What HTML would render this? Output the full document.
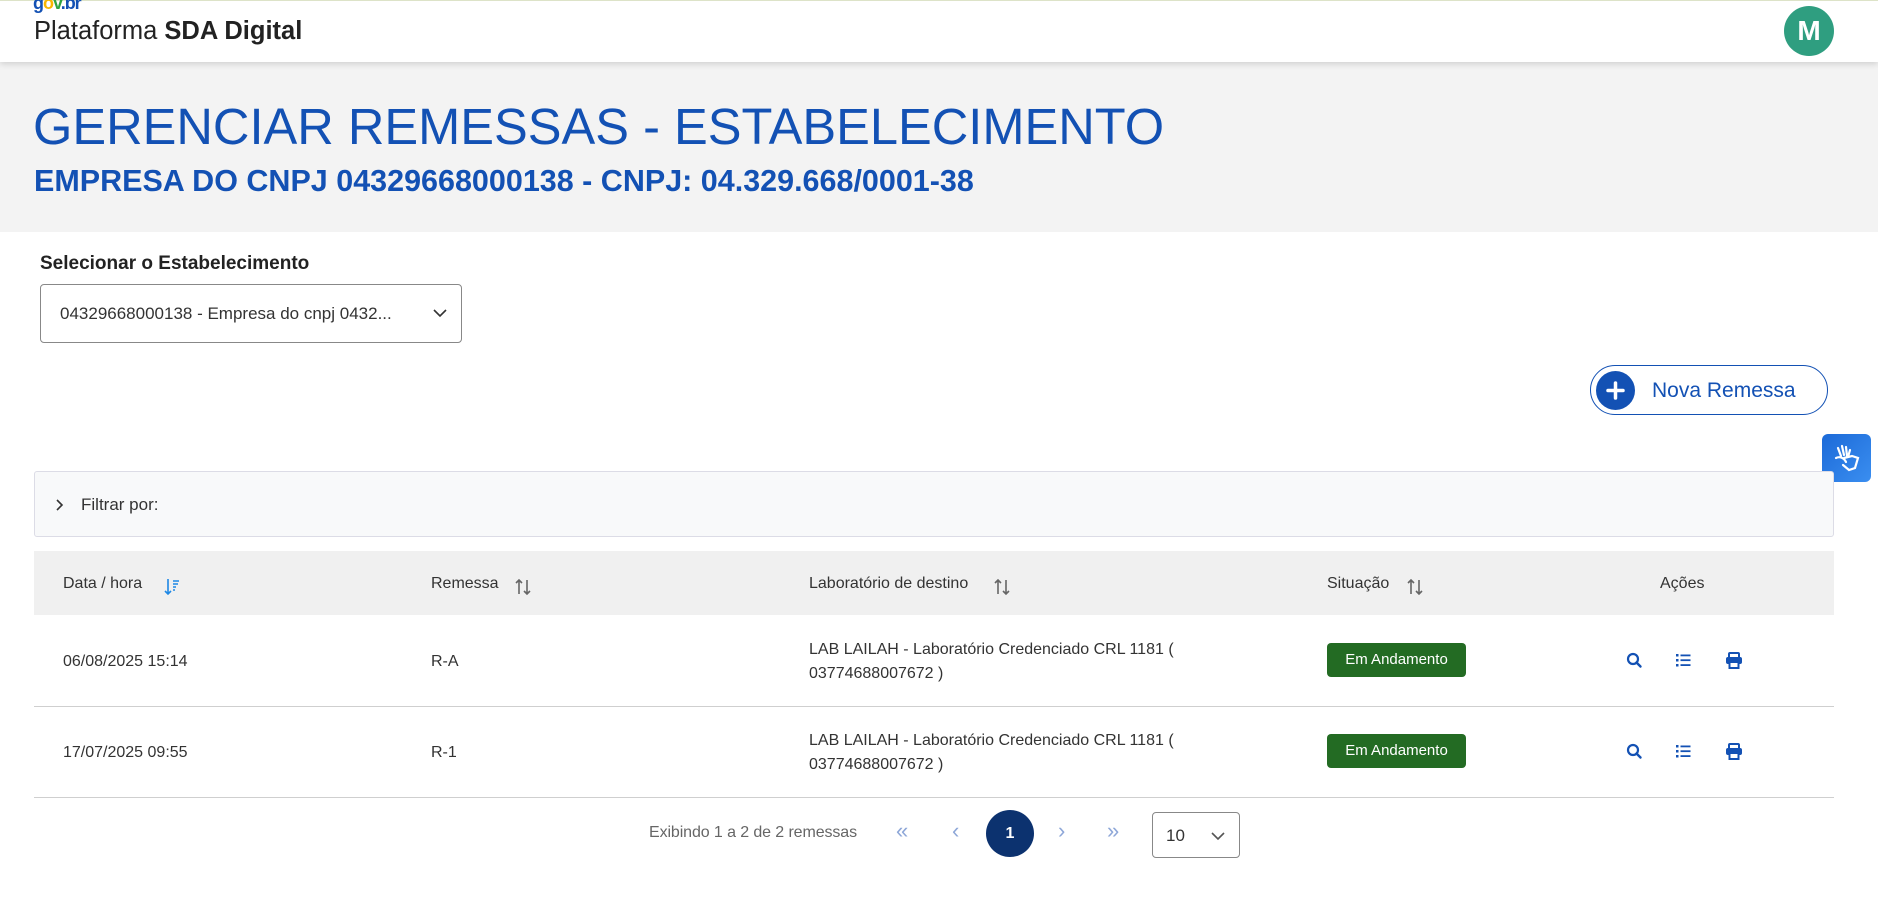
<!DOCTYPE html>
<html><head><meta charset="utf-8"><style>
*{box-sizing:border-box;margin:0;padding:0}
body{width:1878px;height:900px;overflow:hidden;background:#fff;font-family:"Liberation Sans",sans-serif;color:#333;position:relative}
.abs{position:absolute}
.hdr{left:0;top:0;width:1878px;height:62px;background:#fff;box-shadow:0 2px 6px rgba(0,0,0,.15);z-index:2;border-top:1px solid #dde3c8}
.band{left:0;top:62px;width:1878px;height:170px;background:#f3f3f3}
.blue{color:#1351b4}
.th{font-size:16px;color:#333;top:575px}
.td{font-size:16px;color:#333}
.badge{background:#236b23;color:#fff;font-size:15px;border-radius:4px;width:139px;height:34px;line-height:34px;text-align:center}
.line{left:34px;width:1800px;height:1px;background:#cfcfcf}
.pg{font-size:22px;color:#8ea7d8;top:818px}
</style></head><body>
<div class="abs hdr">
 <div class="abs" style="left:33px;top:-8px;font-weight:bold;font-size:18px;color:#1351b4;letter-spacing:-1px">g<span style="color:#f8b600">o</span><span style="color:#2fa341">v</span>.br</div>
 <div class="abs" style="left:34px;top:16px;font-size:25.5px;color:#222">Plataforma <b>SDA Digital</b></div>
 <div class="abs" style="left:1784px;top:5px;width:50px;height:50px;border-radius:50%;background:#2f9e80;color:#fff;font-weight:bold;font-size:28px;text-align:center;line-height:50px">M</div>
</div>
<div class="abs band"></div>
<div class="abs blue" style="left:33px;top:97px;font-size:50.6px;font-weight:300;white-space:nowrap">GERENCIAR REMESSAS - ESTABELECIMENTO</div>
<div class="abs blue" style="left:34px;top:164px;font-size:30.5px;font-weight:bold;white-space:nowrap">EMPRESA DO CNPJ 04329668000138 - CNPJ: 04.329.668/0001-38</div>

<div class="abs" style="left:40px;top:253px;font-size:19px;color:#222;font-weight:600">Selecionar o Estabelecimento</div>
<div class="abs" style="left:40px;top:284px;width:422px;height:59px;border:1px solid #888;border-radius:4px">
 <div class="abs" style="left:19px;top:19px;font-size:17px;color:#333">04329668000138 - Empresa do cnpj 0432...</div>
 <svg class="abs" style="left:391px;top:22px" width="16" height="12" viewBox="0 0 16 12"><path d="M2 3l6 6 6-6" fill="none" stroke="#333" stroke-width="1.6"/></svg>
</div>

<div class="abs" style="left:1590px;top:365px;width:238px;height:50px;border:1px solid #1351b4;border-radius:25px">
 <div class="abs" style="left:5px;top:5px;width:39px;height:39px;border-radius:50%;background:#1351b4"></div>
 <svg class="abs" style="left:15px;top:15px" width="19" height="19" viewBox="0 0 19 19"><path d="M9.5 2v15M2 9.5h15" stroke="#fff" stroke-width="3.5" stroke-linecap="round"/></svg>
 <div class="abs blue" style="left:61px;top:13px;font-size:21px">Nova Remessa</div>
</div>
<div class="abs" style="left:1822px;top:434px;width:49px;height:48px;border-radius:6px;background:linear-gradient(135deg,#1c6ad8,#3a8ef0)">
 <svg class="abs" style="left:10px;top:10px" width="30" height="28" viewBox="0 0 30 28"><path d="M6 4l3 8M10 2l2 9M14 3l1 9M18 6l-2 7M4 14c4-2 8 0 10 4M12 14l8-2 6 2-3 10-6 2-6-5" fill="none" stroke="#fff" stroke-width="2.2" stroke-linecap="round"/></svg>
</div>

<div class="abs" style="left:34px;top:471px;width:1800px;height:66px;background:#f8f9fa;border:1px solid #dcdce6;border-radius:3px">
 <svg class="abs" style="left:20px;top:26px" width="10" height="14" viewBox="0 0 10 14"><path d="M2 2l5 5-5 5" fill="none" stroke="#333" stroke-width="1.6"/></svg>
 <div class="abs" style="left:46px;top:23px;font-size:17px;color:#333">Filtrar por:</div>
</div>

<div class="abs" style="left:34px;top:551px;width:1800px;height:64px;background:#f0f0f0"></div>
<div class="abs th" style="left:63px">Data / hora</div>
<svg class="abs" style="left:164px;top:578px" width="16" height="18" viewBox="0 0 16 18"><path d="M4 1v15M1 13l3 3 3-3M9 3h6M9 6h5M9 9h3M9 12h2" fill="none" stroke="#1e88e5" stroke-width="1.6"/></svg>
<div class="abs th" style="left:431px">Remessa</div>
<div class="abs th" style="left:809px">Laboratório de destino</div>
<div class="abs th" style="left:1327px">Situação</div>
<div class="abs th" style="left:1660px">Ações</div>
<svg class="abs" style="left:514px;top:578px" width="18" height="18" viewBox="0 0 18 18"><path d="M5 16V2M2 5l3-3 3 3M13 2v14M10 13l3 3 3-3" fill="none" stroke="#666" stroke-width="1.6"/></svg>
<svg class="abs" style="left:993px;top:578px" width="18" height="18" viewBox="0 0 18 18"><path d="M5 16V2M2 5l3-3 3 3M13 2v14M10 13l3 3 3-3" fill="none" stroke="#666" stroke-width="1.6"/></svg>
<svg class="abs" style="left:1406px;top:578px" width="18" height="18" viewBox="0 0 18 18"><path d="M5 16V2M2 5l3-3 3 3M13 2v14M10 13l3 3 3-3" fill="none" stroke="#666" stroke-width="1.6"/></svg>

<div class="abs td" style="left:63px;top:653px">06/08/2025 15:14</div>
<div class="abs td" style="left:431px;top:653px">R-A</div>
<div class="abs td" style="left:809px;top:638px;line-height:24px">LAB LAILAH - Laboratório Credenciado CRL 1181 (<br>03774688007672 )</div>
<div class="abs badge" style="left:1327px;top:643px">Em Andamento</div>
<div class="abs line" style="top:706px"></div>

<div class="abs td" style="left:63px;top:744px">17/07/2025 09:55</div>
<div class="abs td" style="left:431px;top:744px">R-1</div>
<div class="abs td" style="left:809px;top:729px;line-height:24px">LAB LAILAH - Laboratório Credenciado CRL 1181 (<br>03774688007672 )</div>
<div class="abs badge" style="left:1327px;top:734px">Em Andamento</div>
<div class="abs line" style="top:797px"></div>

<svg width="0" height="0" style="position:absolute"><defs>
<g id="srch"><circle cx="7" cy="7" r="5" fill="none" stroke="#1351b4" stroke-width="2.2"/><path d="M10.5 10.5l4 4" stroke="#1351b4" stroke-width="2.4" stroke-linecap="round"/></g>
<g id="lst" fill="#1351b4"><rect x="0" y="2" width="2.5" height="2.5"/><rect x="0" y="7" width="2.5" height="2.5"/><rect x="0" y="12" width="2.5" height="2.5"/><rect x="4.5" y="2.5" width="10" height="1.8"/><rect x="4.5" y="7.3" width="10" height="1.8"/><rect x="4.5" y="12.2" width="10" height="1.8"/></g>
<g id="prt"><rect x="3" y="1" width="10" height="5" rx="1" fill="none" stroke="#1351b4" stroke-width="2"/><rect x="0" y="5" width="16" height="7" rx="2" fill="#1351b4"/><rect x="3.5" y="10" width="9" height="6" fill="#fff" stroke="#1351b4" stroke-width="2"/></g>
</defs></svg>
<svg class="abs" style="left:1626px;top:652px" width="17" height="17"><use href="#srch"/></svg>
<svg class="abs" style="left:1676px;top:652px" width="16" height="17"><use href="#lst"/></svg>
<svg class="abs" style="left:1726px;top:652px" width="16" height="17"><use href="#prt"/></svg>
<svg class="abs" style="left:1626px;top:743px" width="17" height="17"><use href="#srch"/></svg>
<svg class="abs" style="left:1676px;top:743px" width="16" height="17"><use href="#lst"/></svg>
<svg class="abs" style="left:1726px;top:743px" width="16" height="17"><use href="#prt"/></svg>

<div class="abs" style="left:649px;top:824px;font-size:16px;color:#666;letter-spacing:-0.1px">Exibindo 1 a 2 de 2 remessas</div>
<div class="abs pg" style="left:896px">«</div>
<div class="abs pg" style="left:952px">‹</div>
<div class="abs" style="left:986px;top:810px;width:48px;height:47px;border-radius:50%;background:#0c326f;color:#fff;font-weight:bold;font-size:16px;text-align:center;line-height:47px">1</div>
<div class="abs pg" style="left:1058px">›</div>
<div class="abs pg" style="left:1107px">»</div>
<div class="abs" style="left:1152px;top:812px;width:88px;height:46px;border:1px solid #888;border-radius:4px">
 <div class="abs" style="left:13px;top:13px;font-size:17px;color:#333">10</div>
 <svg class="abs" style="left:57px;top:17px" width="16" height="12" viewBox="0 0 16 12"><path d="M2 3l6 6 6-6" fill="none" stroke="#555" stroke-width="1.6"/></svg>
</div>
</body></html>
